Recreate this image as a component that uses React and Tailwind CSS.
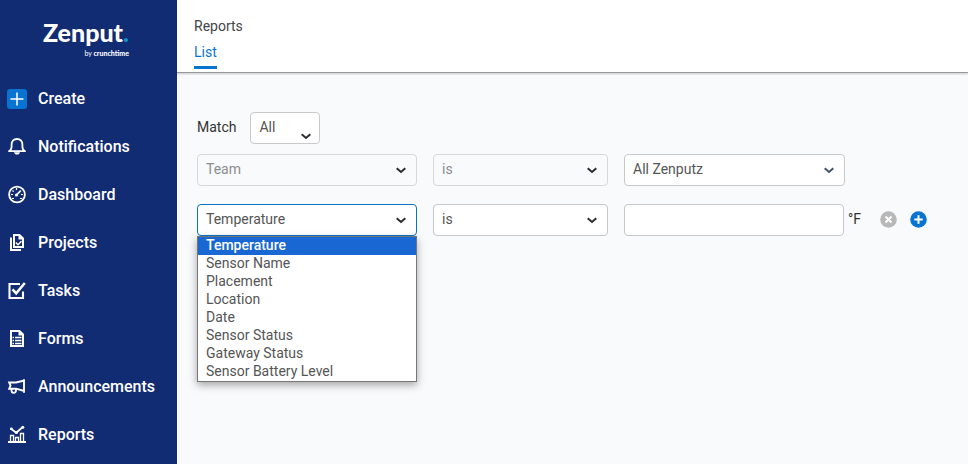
import React from "react";

function Icon({ children, size = 20 }) {
  return (
    <svg
      width={size}
      height={size}
      viewBox="0 0 20 20"
      fill="none"
      stroke="currentColor"
      strokeWidth="1.8"
      aria-hidden="true"
      className="shrink-0"
    >
      {children}
    </svg>
  );
}

const icons = {
  create: (
    <Icon>
      <rect width="20" height="20" rx="3" fill="#0874d1" stroke="none" />
      <path d="M10 3.5v13M3.5 10h13" strokeWidth="1.5" />
    </Icon>
  ),
  bell: (
    <Icon>
      <path d="M2 14.2h16c-2-1.2-2.6-2.2-2.6-4.4V7.5C15.4 4 13.2 2 10 2S4.600 4 4.600 7.500v2.300c0 2.200-.6 3.200-2.600 4.400z" strokeLinejoin="round" />
      <path d="M7 15.200h6c-.4 1.600-1.500 2.300-3 2.300s-2.600-.7-3-2.300z" fill="currentColor" stroke="none" />
    </Icon>
  ),
  gauge: (
    <Icon>
      <circle cx="10" cy="9.500" r="7.900" />
      <path d="M9.500 10 13.800 5.700" strokeWidth="1.700" />
      <circle cx="9.500" cy="10" r="1.600" fill="currentColor" stroke="none" />
      <path d="M9.500 3v2M4 9.500h2M14 9.500h2M5.500 5.500l1.200 1.200M5 13.500h2M13 13.500h2" strokeWidth="1.200" />
    </Icon>
  ),
  projects: (
    <Icon>
      <path d="M7 2h5.500L16 5.500V14H7z" strokeWidth="2" />
      <path d="M11.500 1.500v5h5z" fill="currentColor" stroke="none" />
      <path d="M4 4.500V17h10" strokeWidth="2" />
      <path d="m8.800 9.500 2.200 2.200 3.500-3.500" strokeWidth="1.500" />
    </Icon>
  ),
  tasks: (
    <Icon>
      <path d="M13 3H2.500v14H16v-6.500" strokeWidth="2.100" />
      <path d="m5.500 8.300 3.700 4L17.800 2" strokeWidth="2.500" />
    </Icon>
  ),
  forms: (
    <Icon>
      <path d="M4 2h8.500L16 5.500V17H4z" strokeWidth="2" />
      <path d="M11.500 1.500v5h5z" fill="currentColor" stroke="none" />
      <path d="M5.500 8.500H7M8 8.500h6.500M5.500 11.500H7M8 11.500h6.500M5.500 14.500H7M8 14.500h6.500" strokeWidth="1.700" />
    </Icon>
  ),
  announce: (
    <Icon>
      <path d="M17 2.300v13.400M17.300 3.500 9 5.500H2.200l1.300 3-1.300 3.200H9l8.300 2.300" strokeWidth="1.900" />
      <path d="M4.500 12v1.500c0 1.400.9 2.300 2.200 2.300 1.400 0 2.300-.8 2.300-2.200V12" strokeWidth="1.800" />
    </Icon>
  ),
  chart: (
    <Icon>
      <path d="M1 17h18" strokeWidth="2" />
      <path d="M3.500 16.500v-6h3v6M8.500 16.500v-4h3v4M13.500 16.500v-8h3v8" strokeWidth="1.300" />
      <path d="m4 3.800 5.200 4L15.800 2" strokeWidth="1.800" />
      <circle cx="4.300" cy="3.800" r="1.400" fill="currentColor" stroke="none" />
      <circle cx="9.400" cy="7.500" r="1.500" fill="currentColor" stroke="none" />
      <circle cx="15.800" cy="2.200" r="1.500" fill="currentColor" stroke="none" />
    </Icon>
  ),
};

const navItems = [
  ["Create", "create"],
  ["Notifications", "bell"],
  ["Dashboard", "gauge"],
  ["Projects", "projects"],
  ["Tasks", "tasks"],
  ["Forms", "forms"],
  ["Announcements", "announce"],
  ["Reports", "chart"],
];

const fields = [
  "Temperature",
  "Sensor Name",
  "Placement",
  "Location",
  "Date",
  "Sensor Status",
  "Gateway Status",
  "Sensor Battery Level",
];

function Sidebar() {
  return (
    <aside className="w-[177px] shrink-0 bg-[#122c74] text-white">
      <div className="flex h-[75px] flex-col items-end pt-4 pr-12 font-['Lato',sans-serif]">
        <div className="text-[25px] leading-8 font-black">
          Zenput<span className="text-[#0a93c8]">.</span>
        </div>
        <div className="text-[7px] leading-[10px]">
          by <span className="font-black">crunchtime</span>
        </div>
      </div>
      <nav>
        {navItems.map(([label, icon]) => (
          <a key={label} href="#" className="flex h-12 items-center gap-[11px] pl-[7px] text-base font-medium">
            {icons[icon]}
            {label}
          </a>
        ))}
      </nav>
    </aside>
  );
}

function Select({ label, options, width, tone = "border-[#c8c9cb] bg-white text-[#555]", disabled = false, low = false, arrow = "text-[#2b2d30]" }) {
  return (
    <div className={`relative ${width}`}>
      <select
        aria-label={label}
        disabled={disabled}
        className={`block h-8 w-full appearance-none rounded-[4px] border pb-[2px] pl-2 text-sm opacity-100 outline-none ${tone}`}
      >
        {options.map((option) => (
          <option key={option}>{option}</option>
        ))}
      </select>
      <svg
        width="10"
        height="7"
        viewBox="0 0 10 7"
        fill="none"
        stroke="currentColor"
        strokeWidth="2"
        aria-hidden="true"
        className={`pointer-events-none absolute ${low ? "right-[9px] bottom-1" : "right-[11px] bottom-3"} ${arrow}`}
      >
        <path d="M.7 1.200 5 5l4.300-3.800" />
      </svg>
    </div>
  );
}

function FieldList() {
  return (
    <ul
      role="listbox"
      aria-label="Field options"
      className="absolute top-8 left-0 w-full border border-[#767676] bg-white text-sm text-[#555] shadow-[0_3px_8px_rgba(0,0,0,0.35)]"
    >
      {fields.map((field, i) => (
        <li
          key={field}
          role="option"
          aria-selected={i === 0}
          className={`pb-[2px] pl-2 leading-4 ${i === 0 ? "bg-[#1967d2] font-medium text-white" : ""}`}
        >
          {field}
        </li>
      ))}
    </ul>
  );
}

export default function App() {
  const muted = "border-[#d6d8da] bg-[#f9fafc] text-[#8b8d90]";
  return (
    <div className="flex min-h-screen bg-[#f9fafc] font-['Roboto',sans-serif] text-sm text-[#333]">
      <Sidebar />
      <div className="min-w-0 flex-1">
        <header className="border-b border-[#98999b] bg-white px-[17px] pt-4 pb-[3px] shadow-[0_1px_2px_rgba(0,0,0,0.2)]">
          <h1 className="leading-5 text-[#444]">Reports</h1>
          <nav className="mt-[6px] flex">
            <a href="#" className="border-b-3 border-[#0874d1] pb-1 leading-5 text-[#0874d1]">
              List
            </a>
          </nav>
        </header>
        <main className="px-5 pt-[39px]">
          <div className="flex items-center gap-[14px]">
            <span className="pb-[2px]">Match</span>
            <Select label="Match" options={["All", "Any"]} width="w-[70px]" low />
          </div>
          <div className="mt-[10px] flex gap-4">
            <Select label="First field" options={["Team"]} width="w-[220px]" tone={muted} disabled />
            <Select label="First condition" options={["is"]} width="w-[175px]" tone={muted} disabled />
            <Select label="Team" options={["All Zenputz"]} width="w-[221px]" arrow="text-[#44546a]" />
          </div>
          <div className="mt-[18px] flex items-center gap-4">
            <div className="relative">
              <Select
                label="Second field"
                options={fields}
                width="w-[220px]"
                tone="border-[#0874c8] bg-white text-[#555]"
              />
              <FieldList />
            </div>
            <Select label="Second condition" options={["is", "is not"]} width="w-[175px]" />
            <div className="flex items-center">
              <input
                id="temperature"
                aria-label="Temperature value"
                className="h-8 w-[220px] rounded-[4px] border border-[#c8c9cb] bg-white px-2 outline-none"
              />
              <label htmlFor="temperature" className="w-9 pb-[2px] pl-1">
                °F
              </label>
              <button type="button" aria-label="Remove filter" className="mb-[2px]">
                <svg width="17" height="17" viewBox="0 0 17 17" stroke="#fff" strokeWidth="2" aria-hidden="true">
                  <circle cx="8.500" cy="8.500" r="8.300" fill="#b8b8b8" stroke="none" />
                  <path d="m5.500 5.500 6 6M11.500 5.500l-6 6" />
                </svg>
              </button>
              <button type="button" aria-label="Add filter" className="mb-[2px] ml-[13px]">
                <svg width="17" height="17" viewBox="0 0 17 17" stroke="#fff" strokeWidth="2" aria-hidden="true">
                  <circle cx="8.500" cy="8.500" r="8.300" fill="#0874d1" stroke="none" />
                  <path d="M8.500 4.300v8.400M4.300 8.500h8.400" />
                </svg>
              </button>
            </div>
          </div>
        </main>
      </div>
    </div>
  );
}
